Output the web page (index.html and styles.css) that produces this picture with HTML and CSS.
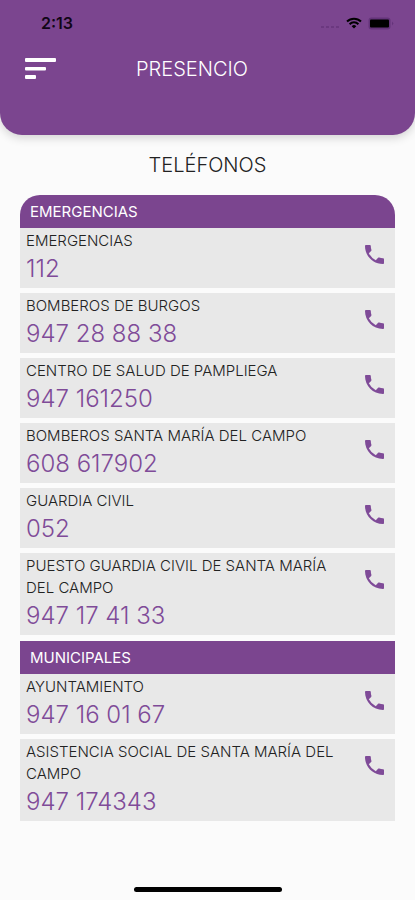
FILE: index.html
```html
<!DOCTYPE html>
<html lang="es">
<head>
<meta charset="utf-8">
<meta name="viewport" content="width=device-width, initial-scale=1">
<title>Presencio - Teléfonos</title>
<link rel="stylesheet" href="styles.css">
</head>
<body>
<svg class="sprite" aria-hidden="true">
  <symbol id="phone" viewBox="3 3 18 18">
    <path d="M4 3h3.500c.55 0 1 .45 1 1 0 1.250.2 2.450.57 3.570.11.35.03.74-.25 1.020l-2.200 2.200a15.150 15.150 0 0 0 6.590 6.590l2.200-2.200c.28-.28.67-.36 1.020-.25 1.120.37 2.330.57 3.570.57.55 0 1 .45 1 1V20c0 .55-.45 1-1 1C10.610 21 3 13.390 3 4c0-.55.45-1 1-1z"/>
  </symbol>
</svg>
<header class="top">
  <div class="status">
    <span class="time">2:13</span>
    <span class="indicators">
      <svg class="signal" viewBox="0 0 20 4" aria-hidden="true"><path d="M1 2h3M6 2h3M11 2h3M16 2h3"/></svg>
      <svg class="wifi" viewBox="0 0 16 12" aria-hidden="true"><path d="M1 4.500a10 10 0 0 1 14 0M3.600 7.200a6.200 6.200 0 0 1 8.800 0"/><path class="dot" d="M5.700 9.200a3.300 3.300 0 0 1 4.600 0L8 11.600z"/></svg>
      <svg class="battery" viewBox="0 0 27 13" aria-hidden="true"><rect class="shell" x=".5" y=".5" width="22" height="12" rx="3"/><rect x="2" y="2.500" width="19" height="8" rx="1"/><path class="shell" d="M24 4.500v4l1.500-2z"/></svg>
    </span>
  </div>
  <div class="bar">
    <button class="menu" type="button" aria-label="Menú">
      <svg viewBox="0 0 32 22" aria-hidden="true"><path d="M1 0h29a1 1 0 0 1 1 1v2a1 1 0 0 1-1 1H1a1 1 0 0 1-1-1V1a1 1 0 0 1 1-1zM1 9h19a1 1 0 0 1 1 1v1.500a1 1 0 0 1-1 1H1a1 1 0 0 1-1-1V10a1 1 0 0 1 1-1zM1 17h9a1 1 0 0 1 1 1v2a1 1 0 0 1-1 1H1a1 1 0 0 1-1-1v-2a1 1 0 0 1 1-1z"/></svg>
    </button>
    <h1>PRESENCIO</h1>
  </div>
</header>
<main>
  <h2>TELÉFONOS</h2>
  <div class="groups">
    <section>
      <h3>EMERGENCIAS</h3>
      <ul>
        <li><a href="tel:112"><span class="name">EMERGENCIAS</span><span class="number">112</span><svg class="call" aria-hidden="true"><use href="#phone"/></svg></a></li>
        <li><a href="tel:947288838"><span class="name">BOMBEROS DE BURGOS</span><span class="number">947 28 88 38</span><svg class="call" aria-hidden="true"><use href="#phone"/></svg></a></li>
        <li><a href="tel:947161250"><span class="name">CENTRO DE SALUD DE PAMPLIEGA</span><span class="number">947 161250</span><svg class="call" aria-hidden="true"><use href="#phone"/></svg></a></li>
        <li><a href="tel:608617902"><span class="name">BOMBEROS SANTA MARÍA DEL CAMPO</span><span class="number">608 617902</span><svg class="call" aria-hidden="true"><use href="#phone"/></svg></a></li>
        <li><a href="tel:052"><span class="name">GUARDIA CIVIL</span><span class="number">052</span><svg class="call" aria-hidden="true"><use href="#phone"/></svg></a></li>
        <li><a href="tel:947174133"><span class="name">PUESTO GUARDIA CIVIL DE SANTA MARÍA DEL CAMPO</span><span class="number">947 17 41 33</span><svg class="call" aria-hidden="true"><use href="#phone"/></svg></a></li>
      </ul>
    </section>
    <section>
      <h3>MUNICIPALES</h3>
      <ul>
        <li><a href="tel:947160167"><span class="name">AYUNTAMIENTO</span><span class="number">947 16 01 67</span><svg class="call" aria-hidden="true"><use href="#phone"/></svg></a></li>
        <li><a href="tel:947174343"><span class="name">ASISTENCIA SOCIAL DE SANTA MARÍA DEL CAMPO</span><span class="number">947 174343</span><svg class="call" aria-hidden="true"><use href="#phone"/></svg></a></li>
      </ul>
    </section>
  </div>
</main>
<footer><div class="home"></div></footer>
</body>
</html>
```
FILE: styles.css
```css
* { box-sizing: border-box; }
body {
  margin: 0;
  min-height: 100vh;
  display: flex;
  flex-direction: column;
  background: #fbfbfb;
  color: #222;
  font-family: Inter, "Liberation Sans", sans-serif;
  font-weight: 300;
}
h1, h2, h3, ul { margin: 0; padding: 0; }
ul { list-style: none; display: grid; gap: 5px; }
.sprite { position: absolute; width: 0; height: 0; }
.top {
  background: #7b458f;
  border-radius: 0 0 22px 22px;
  padding: 12px 20px 46px 25px;
  box-shadow: 0 3px 10px rgba(0, 0, 0, 0.16);
}
.status {
  display: flex;
  justify-content: space-between;
  align-items: center;
  height: 22px;
  padding-left: 16px;
}
.time { font-size: 16px; font-weight: 600; color: #110617; }
.indicators { display: flex; align-items: center; gap: 6px; }
.signal { width: 20px; height: 4px; margin-top: 7px; fill: none; stroke: #5c2c70; stroke-width: 1; }
.wifi { width: 16px; height: 12px; fill: none; stroke: #000; stroke-width: 2; }
.wifi .dot { fill: #000; stroke: none; }
.battery { width: 27px; height: 13px; fill: #000; }
.battery .shell { fill: #64347a; }
.bar {
  display: grid;
  grid-template-columns: 40px 1fr 76px;
  align-items: center;
  height: 55px;
  padding-top: 14px;
}
.menu { width: 32px; height: 24px; padding: 0; border: 0; background: none; }
.menu svg { display: block; width: 32px; height: 22px; fill: #fff; }
h1, h2 { font-size: 20px; line-height: 30px; font-weight: 300; text-align: center; }
h1 { color: #fff; }
main { flex: 1; padding: 15px 20px 0; }
.groups { display: grid; gap: 6px; margin-top: 15px; }
section:first-child h3 { border-radius: 20px 20px 0 0; }
h3 {
  background: #7b458f;
  color: #fff;
  font-size: 15px;
  font-weight: 400;
  line-height: 33px;
  padding: 0 10px;
}
li a {
  display: grid;
  grid-template-columns: 1fr 19px;
  column-gap: 20px;
  padding: 2px 11px 2px 6px;
  background: #e8e8e8;
  color: inherit;
  text-decoration: none;
}
.name { font-size: 15px; line-height: 22px; }
.number { grid-column: 1; font-size: 24px; line-height: 34px; color: #7f4b98; }
.call {
  grid-area: 1 / 2 / 3 / 3;
  width: 19px;
  height: 19px;
  margin-top: 15px;
  fill: #7f4b98;
}
footer { padding: 10px 0 8px; }
.home { width: 148px; height: 5px; margin: 0 auto; border-radius: 3px; background: #000; }
```
